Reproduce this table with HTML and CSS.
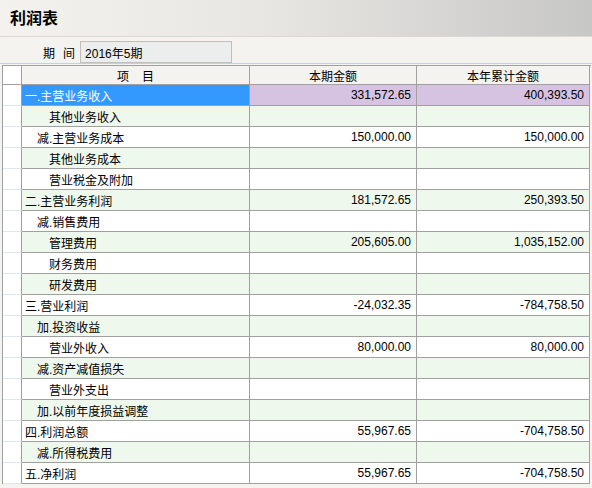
FILE: index.html
```html
<!DOCTYPE html>
<html lang="zh-CN">
<head>
<meta charset="utf-8">
<title>利润表</title>
<link rel="stylesheet" href="styles.css">
</head>
<body>
<div class="titlebar"><span class="title">利润表</span></div>
<div class="toolbar">
  <span class="label">期<span class="gap"></span>间</span>
  <div class="input">2016年5期</div>
</div>
<div class="sep"></div>
<div class="grid">
  <div class="row head">
    <div class="rh"></div>
    <div class="c c1 center">项<span class="gap2"></span>目</div>
    <div class="c center">本期金额</div>
    <div class="c center">本年累计金额</div>
  </div>
  <div class="row sel"><div class="rh"></div><div class="c c1 l0">一.主营业务收入</div><div class="c num">331,572.65</div><div class="c num">400,393.50</div></div>
  <div class="row alt"><div class="rh"></div><div class="c c1 l2">其他业务收入</div><div class="c num"></div><div class="c num"></div></div>
  <div class="row"><div class="rh"></div><div class="c c1 l1">减.主营业务成本</div><div class="c num">150,000.00</div><div class="c num">150,000.00</div></div>
  <div class="row alt"><div class="rh"></div><div class="c c1 l2">其他业务成本</div><div class="c num"></div><div class="c num"></div></div>
  <div class="row"><div class="rh"></div><div class="c c1 l2">营业税金及附加</div><div class="c num"></div><div class="c num"></div></div>
  <div class="row alt"><div class="rh"></div><div class="c c1 l0">二.主营业务利润</div><div class="c num">181,572.65</div><div class="c num">250,393.50</div></div>
  <div class="row"><div class="rh"></div><div class="c c1 l1">减.销售费用</div><div class="c num"></div><div class="c num"></div></div>
  <div class="row alt"><div class="rh"></div><div class="c c1 l2">管理费用</div><div class="c num">205,605.00</div><div class="c num">1,035,152.00</div></div>
  <div class="row"><div class="rh"></div><div class="c c1 l2">财务费用</div><div class="c num"></div><div class="c num"></div></div>
  <div class="row alt"><div class="rh"></div><div class="c c1 l2">研发费用</div><div class="c num"></div><div class="c num"></div></div>
  <div class="row"><div class="rh"></div><div class="c c1 l0">三.营业利润</div><div class="c num">-24,032.35</div><div class="c num">-784,758.50</div></div>
  <div class="row alt"><div class="rh"></div><div class="c c1 l1">加.投资收益</div><div class="c num"></div><div class="c num"></div></div>
  <div class="row"><div class="rh"></div><div class="c c1 l2">营业外收入</div><div class="c num">80,000.00</div><div class="c num">80,000.00</div></div>
  <div class="row alt"><div class="rh"></div><div class="c c1 l1">减.资产减值损失</div><div class="c num"></div><div class="c num"></div></div>
  <div class="row"><div class="rh"></div><div class="c c1 l2">营业外支出</div><div class="c num"></div><div class="c num"></div></div>
  <div class="row alt"><div class="rh"></div><div class="c c1 l1">加.以前年度损益调整</div><div class="c num"></div><div class="c num"></div></div>
  <div class="row"><div class="rh"></div><div class="c c1 l0">四.利润总额</div><div class="c num">55,967.65</div><div class="c num">-704,758.50</div></div>
  <div class="row alt"><div class="rh"></div><div class="c c1 l1">减.所得税费用</div><div class="c num"></div><div class="c num"></div></div>
  <div class="row"><div class="rh"></div><div class="c c1 l0">五.净利润</div><div class="c num">55,967.65</div><div class="c num">-704,758.50</div></div>
</div>
</body>
</html>
```

FILE: styles.css
```css
html, body {
  margin: 0;
  padding: 0;
}
body {
  background: #f5f3ef;
  font-family: "Liberation Sans", "Noto Sans CJK SC", sans-serif;
  font-size: 12px;
  color: #111;
  width: 592px;
  height: 488px;
  overflow: hidden;
}
.titlebar {
  height: 36px;
  border-bottom: 1px solid #dcd8d2;
  background: linear-gradient(to right, #f4f2ee 0%, #e8e6e2 45%, #c7c7c6 100%);
  display: flex;
  align-items: center;
  padding-left: 10px;
}
.title {
  font-family: "Noto Sans CJK SC", sans-serif;
  font-weight: bold;
  font-size: 16px;
  color: #000;
  position: relative;
  top: -1px;
}
.toolbar {
  height: 26px;
  display: flex;
  align-items: flex-end;
  padding-left: 43px;
  padding-bottom: 0;
}
.label {
  display: flex;
  align-items: center;
  height: 22px;
  font-family: "Noto Sans CJK SC", sans-serif;
  font-size: 12px;
  color: #000;
}
.gap { display: inline-block; width: 8px; }
.gap2 { display: inline-block; width: 13px; }
.input {
  margin-left: 5px;
  width: 146px;
  height: 20px;
  border: 1px solid #c6bdb4;
  background: #eceeed;
  padding-left: 4px;
  display: flex;
  align-items: center;
  color: #000;
}
.sep {
  height: 1px;
  background: #bcd3e6;
  margin-bottom: 1px;
}
.grid {
  margin-left: 2px;
  width: 588px;
  border-top: 1px solid #a0a0a0;
  border-left: 1px solid #a0a0a0;
}
.row {
  display: grid;
  grid-template-columns: 19px 228px 167px 173px;
  height: 21px;
}
.row.head {
  height: 19px;
  background: #f5f3ef;
}
.rh {
  background: #fff;
  border-right: 1px solid #a0a0a0;
  border-bottom: 1px solid #dce6f2;
}
.head .rh {
  border-bottom: 1px solid #a0a0a0;
}
.c {
  border-right: 1px solid #a0a0a0;
  border-bottom: 1px solid #a0a0a0;
  display: flex;
  align-items: center;
  white-space: nowrap;
  overflow: hidden;
  color: #000;
}
.center { justify-content: center; }
.num {
  justify-content: flex-end;
  padding-right: 5px;
}
.l0 { padding-left: 3px; }
.l1 { padding-left: 15px; }
.l2 { padding-left: 27px; }
.row.alt .c { background: #eff8ec; }
.row .c { background: #fff; }
.row.head .c { background: #f5f3ef; }
.row.alt .c { background: #eff8ec; }
.row.sel .c { background: #d6c3e2; }
.row.sel .c1 { background: #3399ff; color: #fff; }
```
